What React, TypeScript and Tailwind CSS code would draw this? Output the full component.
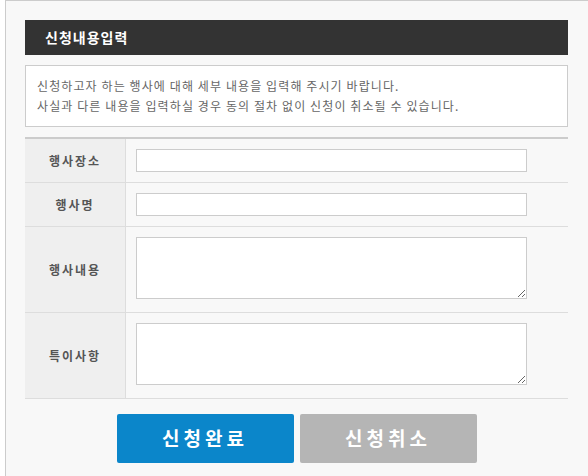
import React from 'react';

const FONT = "font-['Noto_Sans_CJK_KR','Noto_Sans',sans-serif]";

const ROWS: { label: string; kind: 'input' | 'textarea' }[] = [
  { label: '행사장소', kind: 'input' },
  { label: '행사명', kind: 'input' },
  { label: '행사내용', kind: 'textarea' },
  { label: '특이사항', kind: 'textarea' },
];

function FormRow({ label, kind }: { label: string; kind: 'input' | 'textarea' }) {
  return (
    <div className="flex border-b border-[#dddddd]">
      <div className="w-[101px] shrink-0 bg-[#efefef] border-r border-[#dddddd] flex items-center justify-center text-[12px] font-bold text-[#555555] tracking-[2px]">
        {label}
      </div>
      <div className={kind === 'input' ? 'flex-1 pl-[10px] py-[10px]' : 'flex-1 pl-[10px] pt-[10px] pb-[13px]'}>
        {kind === 'input' ? (
          <input type="text" className="block w-[391px] h-[23px] bg-white border border-[#cccccc] outline-none" />
        ) : (
          <textarea className="block w-[391px] h-[62px] bg-white border border-[#cccccc] outline-none" />
        )}
      </div>
    </div>
  );
}

export default function App() {
  return (
    <div className={`w-[588px] h-[476px] bg-white overflow-hidden ${FONT}`}>
      <div className="ml-[5px] h-full bg-[#f8f8f8] border-l border-t border-[#cccccc] pl-[19px] pt-[19px]">
        <div className="w-[543px]">
          <div className="h-[35px] bg-[#333333] flex items-center pl-[20px]">
            <h2 className="text-[14px] font-bold text-white tracking-[1px]">신청내용입력</h2>
          </div>

          <div className="mt-[10px] bg-white border border-[#cccccc] pl-[11px] py-[10px] text-[12px] leading-[20px] tracking-[1.1px] text-[#666666]">
            <p>신청하고자 하는 행사에 대해 세부 내용을 입력해 주시기 바랍니다.</p>
            <p>사실과 다른 내용을 입력하실 경우 동의 절차 없이 신청이 취소될 수 있습니다.</p>
          </div>

          <div className="mt-[10px] border-t-2 border-[#cccccc]">
            {ROWS.map((r) => (
              <FormRow key={r.label} label={r.label} kind={r.kind} />
            ))}
          </div>

          <div className="mt-[15px] flex justify-center gap-[6px]">
            <button className="w-[177px] h-[49px] rounded-[2px] bg-[#0b86ca] text-white text-[19px] font-bold tracking-[4px]">
              신청완료
            </button>
            <button className="w-[177px] h-[49px] rounded-[2px] bg-[#b5b5b5] text-white text-[19px] font-bold tracking-[4px]">
              신청취소
            </button>
          </div>
        </div>
      </div>
    </div>
  );
}
